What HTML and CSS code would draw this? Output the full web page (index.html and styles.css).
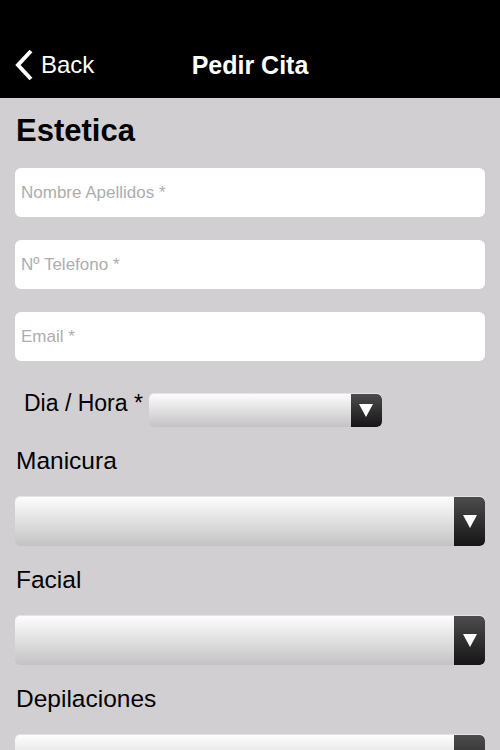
FILE: index.html
```html
<!DOCTYPE html>
<html lang="es">

<head>
    <meta charset="UTF-8">
    <meta name="viewport" content="width=device-width, initial-scale=1.0">
    <title>Pedir Cita</title>
    <link rel="stylesheet" href="styles.css">
</head>

<body>
    <div class="navbar">
        <a class="back" href="#">
            <svg class="back-icon" width="20" height="32" viewBox="0 0 20 32">
                <polyline points="17,2 4,16 17,30" fill="none" stroke="#fff" stroke-width="4" />
            </svg>
            <span>Back</span>
        </a>
        <div class="title">Pedir Cita</div>
        <div></div>
    </div>

    <div class="content">
        <h2 class="section-title">Estetica</h2>

        <input class="field" type="text" placeholder="Nombre Apellidos *">
        <input class="field" type="tel" placeholder="Nº Telefono *">
        <input class="field" type="email" placeholder="Email *">

        <div class="date-row">
            <label class="date-label">Dia / Hora *</label>
            <div class="picker picker-small">
                <span class="picker-btn">
                    <svg width="14" height="13" viewBox="0 0 14 13"><polygon points="0,0 14,0 7,13" fill="#fff" /></svg>
                </span>
            </div>
        </div>

        <label class="label">Manicura</label>
        <div class="picker">
            <span class="picker-btn">
                <svg width="14" height="13" viewBox="0 0 14 13"><polygon points="0,0 14,0 7,13" fill="#fff" /></svg>
            </span>
        </div>

        <label class="label">Facial</label>
        <div class="picker">
            <span class="picker-btn">
                <svg width="14" height="13" viewBox="0 0 14 13"><polygon points="0,0 14,0 7,13" fill="#fff" /></svg>
            </span>
        </div>

        <label class="label">Depilaciones</label>
        <div class="picker">
            <span class="picker-btn">
                <svg width="14" height="13" viewBox="0 0 14 13"><polygon points="0,0 14,0 7,13" fill="#fff" /></svg>
            </span>
        </div>
    </div>
</body>

</html>
```

FILE: styles.css
```css
body {
    margin: 0;
    background-color: #d1cfd2;
    font-family: "Liberation Sans", Arial, sans-serif;
    color: #000;
    overflow: hidden;
}

.navbar {
    height: 98px;
    box-sizing: border-box;
    padding-top: 48px;
    background-color: #000;
    color: #fff;
    display: grid;
    grid-template-columns: 1fr auto 1fr;
    align-items: start;
    line-height: 34px;
}

.back {
    display: flex;
    align-items: center;
    height: 34px;
    gap: 7px;
    padding-left: 14px;
    color: #fff;
    text-decoration: none;
    font-size: 24px;
}

.title {
    font-size: 25px;
    font-weight: bold;
}

.content {
    padding: 0 15px;
}

.section-title {
    margin: 16px 0 20px 1px;
    font-size: 31px;
    line-height: 34px;
}

.field {
    display: block;
    width: 100%;
    height: 49px;
    box-sizing: border-box;
    margin-bottom: 23px;
    padding: 0 6px;
    border: none;
    border-radius: 6px;
    background-color: #fff;
    font-family: inherit;
    font-size: 17px;
}

.field::placeholder {
    color: #adadad;
}

.date-row {
    display: flex;
    align-items: flex-start;
    margin-top: 33px;
    padding-left: 9px;
}

.date-label {
    font-size: 23px;
    line-height: 28px;
    margin-top: -5px;
    margin-right: 6px;
}

.label {
    display: block;
    margin: 20px 0 22px 1px;
    font-size: 24.5px;
    line-height: 28px;
}

.picker {
    display: flex;
    justify-content: flex-end;
    height: 49px;
    border-radius: 5px;
    background: linear-gradient(#fdfdfd, #c3c3c3);
    box-shadow: 0 -1px 0 #e4e4e4;
    overflow: hidden;
}

.picker-small {
    width: 233px;
    height: 33px;
}

.picker-btn {
    width: 31px;
    display: flex;
    align-items: center;
    justify-content: center;
    background: linear-gradient(#4c4c4c, #151515);
    border-radius: 0 5px 5px 0;
}
```
